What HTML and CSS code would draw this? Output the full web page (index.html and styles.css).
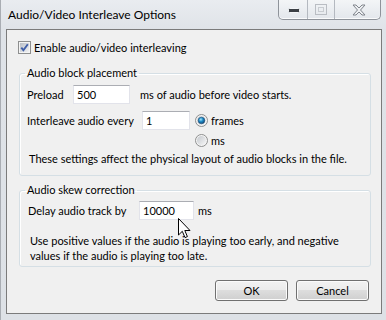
FILE: index.html
```html
<!DOCTYPE html>
<html>
<head>
<meta charset="utf-8">
<link rel="stylesheet" href="styles.css">
</head>
<body>
<div class="window">
  <div class="titlebar">
    <span class="title">Audio/Video Interleave Options</span>
    <div class="caption-buttons">
      <span class="cb cb-min"><svg width="13" height="6" viewBox="0 0 13 6"><rect x="0.5" y="0.5" width="11" height="4" rx="1" fill="#3b3f45" stroke="#f4f6f8"/></svg></span>
      <span class="cb cb-max"><svg width="12" height="11" viewBox="0 0 12 11"><rect x="0.5" y="0.5" width="11" height="10" fill="none" stroke="#b9bdc3"/><rect x="3.5" y="3.5" width="5" height="4" fill="none" stroke="#c8ccd1"/></svg></span>
      <span class="cb cb-close"><svg width="14" height="12" viewBox="0 0 14 12"><path d="M1 1h3l3 3 3-3h3l-4.5 5 4.5 5h-3l-3-3-3 3h-3l4.5-5z" fill="#eef0f3" stroke="#80858c" stroke-width="1" stroke-linejoin="round"/></svg></span>
    </div>
  </div>
  <div class="client">
    <label class="check-row">
      <span class="checkbox"><svg width="13" height="13" viewBox="0 0 13 13"><defs><linearGradient id="cbg" x1="0" y1="0" x2="1" y2="1"><stop offset="0" stop-color="#b9bec6"/><stop offset="1" stop-color="#f1f2f3"/></linearGradient></defs><rect x="0.5" y="0.5" width="12" height="12" fill="#f4f4f4" stroke="#8e8f8f"/><rect x="2" y="2" width="9" height="9" fill="url(#cbg)"/><path d="M3.3 6.6 L5.4 9.2 L9.8 3.2" fill="none" stroke="#3f5ea8" stroke-width="1.9"/></svg></span>
      <span>Enable audio/video interleaving</span>
    </label>

    <fieldset class="group group-placement">
      <legend>Audio block placement</legend>
      <div class="row-preload">
        <span class="lbl lbl-preload">Preload</span>
        <span class="edit edit-preload">500</span>
        <span class="after-preload">ms of audio before video starts.</span>
      </div>
      <div class="row-interleave">
        <span class="lbl lbl-interleave">Interleave audio every</span>
        <span class="edit edit-interleave">1</span>
        <div class="radios">
          <div class="radio-row"><span class="radio checked"><svg width="13" height="13" viewBox="0 0 13 13"><defs><linearGradient id="rbg" x1="0" y1="0" x2="1" y2="1"><stop offset="0" stop-color="#c4c8cd"/><stop offset="1" stop-color="#f6f6f6"/></linearGradient><radialGradient id="rdot" cx="0.4" cy="0.35" r="0.7"><stop offset="0" stop-color="#a6e4fb"/><stop offset="0.45" stop-color="#1d8cc8"/><stop offset="1" stop-color="#123f6d"/></radialGradient></defs><circle cx="6.5" cy="6.5" r="6" fill="#f4f4f4" stroke="#8e8f8f"/><circle cx="6.5" cy="6.5" r="4.5" fill="url(#rbg)"/><circle cx="6.5" cy="6.5" r="3.3" fill="url(#rdot)" stroke="#1c4f78" stroke-width="0.6"/></svg></span><span>frames</span></div>
          <div class="radio-row"><span class="radio"><svg width="13" height="13" viewBox="0 0 13 13"><defs><linearGradient id="rbg2" x1="0" y1="0" x2="1" y2="1"><stop offset="0" stop-color="#c4c8cd"/><stop offset="1" stop-color="#f6f6f6"/></linearGradient></defs><circle cx="6.5" cy="6.5" r="6" fill="#f4f4f4" stroke="#8e8f8f"/><circle cx="6.5" cy="6.5" r="4.5" fill="url(#rbg2)"/></svg></span><span>ms</span></div>
        </div>
      </div>
      <p class="note-placement">These settings affect the physical layout of audio blocks in the file.</p>
    </fieldset>

    <fieldset class="group group-skew">
      <legend>Audio skew correction</legend>
      <div class="row-delay">
        <span class="lbl lbl-delay">Delay audio track by</span>
        <span class="edit edit-delay">10000</span>
        <span class="after-delay">ms</span>
      </div>
      <p class="note-skew">Use positive values if the audio is playing too early, and negative<br>values if the audio is playing too late.</p>
    </fieldset>

    <div class="buttons">
      <span class="btn">OK</span>
      <span class="btn">Cancel</span>
    </div>
  </div>
  <svg class="cursor" width="14" height="22" viewBox="0 0 14 22"><path d="M0.5 0.5 L0.5 17 L4.3 13.3 L7 19.6 L9.4 18.6 L6.8 12.5 L12 12.5 Z" fill="#ffffff" stroke="#000000" stroke-width="1" stroke-linejoin="miter"/></svg>
</div>
</body>
</html>
```

FILE: styles.css
```css
* { box-sizing: border-box; }
html, body { margin: 0; padding: 0; }
body {
  width: 386px;
  height: 320px;
  overflow: hidden;
  font-family: Lato, "Liberation Sans", sans-serif;
  font-size: 11px;
  color: #000;
}
.window {
  position: relative;
  width: 386px;
  height: 320px;
  background: linear-gradient(#e9ecf0 0px, #dfe3e8 30px, #dde1e6 100%);
  border-left: 1px solid #a9adb3;
  overflow: hidden;
}
.titlebar {
  height: 29px;
  display: flex;
  align-items: flex-start;
}
.title {
  padding-left: 7px;
  margin-top: 7px;
  line-height: 16px;
  font-size: 12px;
  color: #000;
}
.caption-buttons {
  margin-left: auto;
  margin-right: 5px;
  display: flex;
  height: 20px;
  border: 1px solid #8e939a;
  border-top: none;
  border-radius: 0 0 5px 5px;
  background: linear-gradient(#f3f5f7, #e3e7ec);
  box-shadow: inset 0 -1px 0 #fafbfc;
}
.cb {
  display: flex;
  align-items: center;
  justify-content: center;
  height: 19px;
}
.cb-min { width: 29px; border-right: 1px solid #b4b9c0; padding-left: 3px; padding-top: 3px; }
.cb-max { width: 27px; border-right: 1px solid #b4b9c0; }
.cb-close { width: 45px; padding-left: 2px; }
.client {
  margin-left: 5px;
  margin-right: 4px;
  height: 285px;
  background: #f0f0f0;
  border: 1px solid #7b7b7b;
  padding-top: 11px;
}
.check-row {
  display: flex;
  align-items: center;
  height: 13px;
  padding-left: 11px;
  gap: 3px;
}
.checkbox, .radio { display: block; width: 13px; height: 13px; }
.checkbox svg, .radio svg { display: block; }
.group {
  margin: 0 10px 0 12px;
  border: 1px solid #d5dfe5;
  border-radius: 3px;
  box-shadow: inset 1px 1px 0 #fff;
  padding: 0 0 0 7px;
  min-width: 0;
}
.group legend {
  padding: 0 2px;
  margin-left: -2px;
  line-height: 14px;
  height: 14px;
}
.group-placement { margin-top: 12px; padding-top: 5px; padding-bottom: 9px; }
.group-skew { margin-top: 7px; padding-top: 4px; padding-bottom: 3px; }
.edit {
  display: block;
  height: 19px;
  background: #fff;
  border: 1px solid #e2e3ea;
  border-top-color: #abadb3;
  padding-left: 3px;
  line-height: 17px;
}
.lbl { display: block; }
.row-preload {
  display: flex;
  align-items: center;
  height: 19px;
}
.lbl-preload { width: 46px; }
.edit-preload { width: 57px; margin-right: 10px; }
.row-interleave {
  display: flex;
  align-items: flex-start;
  margin-top: 7px;
}
.lbl-interleave { width: 115px; line-height: 19px; white-space: nowrap; }
.edit-interleave { width: 48px; margin-right: 5px; }
.radios { display: flex; flex-direction: column; gap: 1px; }
.radio-row {
  display: flex;
  align-items: center;
  height: 19px;
  gap: 3px;
}
.note-placement {
  margin: 1px 0 0 2px;
  line-height: 15px;
  white-space: nowrap;
}
.row-delay {
  display: flex;
  align-items: center;
  height: 19px;
  padding-left: 1px;
}
.lbl-delay { width: 111px; }
.edit-delay { width: 55px; margin-right: 4px; }
.note-skew {
  margin: 13px 0 0 3px;
  line-height: 15px;
  white-space: nowrap;
}
.buttons {
  display: flex;
  justify-content: flex-end;
  gap: 8px;
  margin: 13px 12px 0 0;
}
.btn {
  display: flex;
  align-items: center;
  justify-content: center;
  width: 73px;
  height: 21px;
  border: 1px solid #707070;
  border-radius: 3px;
  background: linear-gradient(#f2f2f2 0%, #ebebeb 50%, #dddddd 50%, #cfcfcf 100%);
  box-shadow: inset 0 0 0 1px #fbfbfb;
}
.cursor {
  position: absolute;
  left: 177px;
  top: 218px;
}
```
